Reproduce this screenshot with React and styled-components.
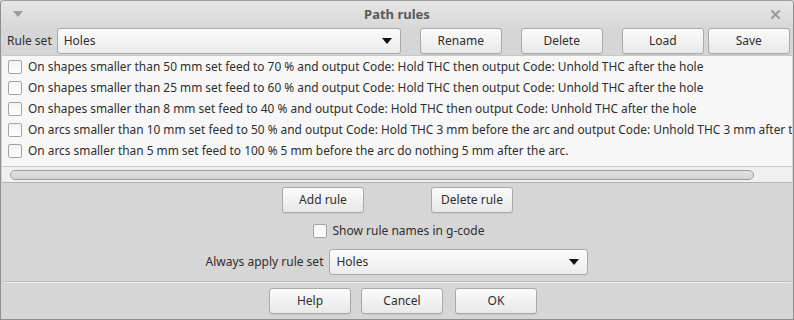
import React from "react";
import styled, { createGlobalStyle } from "styled-components";

const Global = createGlobalStyle`
  html, body {
    margin: 0;
    padding: 0;
    background: #d6d6d6;
  }
  * {
    box-sizing: border-box;
  }
`;

const Window = styled.div`
  width: 794px;
  height: 320px;
  display: flex;
  flex-direction: column;
  background: #d6d6d6;
  border: 1px solid #8e8e8e;
  border-top-color: #a0a0a0;
  border-radius: 4px 4px 0 0;
  font-family: "Noto Sans", "Open Sans", sans-serif;
  font-size: 12px;
  color: #2e2e2e;
  overflow: hidden;
`;

const TitleBar = styled.div`
  height: 26px;
  display: flex;
  align-items: center;
  justify-content: space-between;
  padding: 0 13px 0 12px;
  background: linear-gradient(#e6e6e6, #d8d8d8);
`;

const Title = styled.div`
  font-weight: bold;
  font-size: 13px;
  color: #5a5a5a;
`;

const Body = styled.div`
  flex: 1;
  display: flex;
  flex-direction: column;
  padding: 0 1px;
`;

const Row = styled.div`
  display: flex;
  align-items: center;
  justify-content: ${(p) => p.justify || "flex-start"};
  gap: ${(p) => p.gap || "0"};
  height: ${(p) => p.h || "25px"};
  margin-top: ${(p) => p.mt || "0"};
  padding: ${(p) => p.pad || "0"};
`;

const Label = styled.span`
  white-space: nowrap;
  margin-right: ${(p) => p.mr || "0"};
`;

const Button = styled.div`
  width: ${(p) => p.w || "82px"};
  height: 26px;
  display: flex;
  align-items: center;
  justify-content: center;
  margin-left: ${(p) => p.ml || "0"};
  border: 1px solid #a9a9a9;
  border-radius: 3px;
  background: linear-gradient(#fbfbfb, #e8e8e8);
  box-shadow: 0 1px 0 rgba(0, 0, 0, 0.06);
  color: #2e2e2e;
`;

const Combo = styled.div`
  width: ${(p) => p.w};
  height: 26px;
  display: flex;
  align-items: center;
  justify-content: space-between;
  padding: 0 8px 0 6px;
  border: 1px solid #a9a9a9;
  border-radius: 3px;
  background: linear-gradient(#fbfbfb, #ececec);
`;

const Arrow = styled.span`
  width: 0;
  height: 0;
  border-left: 5px solid transparent;
  border-right: 5px solid transparent;
  border-top: 6px solid #111;
`;

const List = styled.div`
  height: 128px;
  margin-top: 1px;
  display: flex;
  flex-direction: column;
  background: #f7f7f7;
  border-top: 1px solid #c8c8c8;
  border-bottom: 1px solid #b4b4b4;
  overflow: hidden;
`;

const Rows = styled.div`
  flex: 1;
  overflow: hidden;
`;

const RuleRow = styled.div`
  height: 20.8px;
  display: flex;
  align-items: center;
  padding-left: 6px;
  white-space: nowrap;
  font-size: 11.9px;
`;

const Check = styled.span`
  flex: none;
  width: 14px;
  height: 14px;
  margin-right: ${(p) => p.mr || "6px"};
  margin-top: 2px;
  border: 1px solid #a4a4a4;
  border-radius: 2px;
  background: linear-gradient(#f4f4f4, #fdfdfd);
`;

const ScrollArea = styled.div`
  height: 16px;
  display: flex;
  align-items: center;
  padding: 0 38px 0 8px;
  background: #efefef;
  border-top: 1px solid #c9c9c9;
`;

const Thumb = styled.div`
  flex: 1;
  height: 10px;
  border: 1px solid #9c9c9c;
  border-radius: 5px;
  background: linear-gradient(#e2e2e2, #d4d4d4);
`;

const Separator = styled.div`
  height: 2px;
  margin: 7px 1px 0;
  border-top: 1px solid #bdbdbd;
  border-bottom: 1px solid #efefef;
`;

const rules = [
  "On shapes smaller than 50 mm set feed to 70 % and output Code: Hold THC then output Code: Unhold THC after the hole",
  "On shapes smaller than 25 mm set feed to 60 % and output Code: Hold THC then output Code: Unhold THC after the hole",
  "On shapes smaller than 8 mm set feed to 40 % and output Code: Hold THC then output Code: Unhold THC after the hole",
  "On arcs smaller than 10 mm set feed to 50 % and output Code: Hold THC 3 mm before the arc and output Code: Unhold THC 3 mm after the arc",
  "On arcs smaller than 5 mm set feed to 100 % 5 mm before the arc do nothing 5 mm after the arc.",
];

const CloseIcon = () => (
  <svg width="9" height="9" viewBox="0 0 9 9">
    <path d="M1 1 L8 8 M8 1 L1 8" stroke="#9a9a9a" strokeWidth="2" strokeLinecap="round" />
  </svg>
);

const MenuIcon = () => (
  <svg width="10" height="6" viewBox="0 0 10 6">
    <path d="M0 0 H10 L5 6 Z" fill="#9c9c9c" />
  </svg>
);

export default function App() {
  return (
    <>
      <Global />
      <Window>
        <TitleBar>
          <MenuIcon />
          <Title>Path rules</Title>
          <CloseIcon />
        </TitleBar>
        <Body>
          <Row h="27px" pad="0 0 0 5px">
            <Label mr="5px">Rule set</Label>
            <Combo w="344px">
              <span>Holes</span>
              <Arrow />
            </Combo>
            <Button ml="19px">Rename</Button>
            <Button ml="19px">Delete</Button>
            <Button ml="19px">Load</Button>
            <Button ml="4px">Save</Button>
          </Row>
          <List>
            <Rows>
              {rules.map((r) => (
                <RuleRow key={r}>
                  <Check />
                  <span>{r}</span>
                </RuleRow>
              ))}
            </Rows>
            <ScrollArea>
              <Thumb />
            </ScrollArea>
          </List>
          <Row justify="center" gap="67px" mt="4px" pad="0 0 0 1px">
            <Button>Add rule</Button>
            <Button>Delete rule</Button>
          </Row>
          <Row justify="center" h="20px" mt="8px" pad="0 0 0 3px">
            <Check />
            <Label>Show rule names in g-code</Label>
          </Row>
          <Row justify="center" mt="9px">
            <Label mr="6px">Always apply rule set</Label>
            <Combo w="259px">
              <span>Holes</span>
              <Arrow />
            </Combo>
          </Row>
          <Separator />
          <Row justify="center" mt="5px" pad="0 0 0 12px">
            <Button>Help</Button>
            <Button ml="10px">Cancel</Button>
            <Button ml="12px">OK</Button>
          </Row>
        </Body>
      </Window>
    </>
  );
}
